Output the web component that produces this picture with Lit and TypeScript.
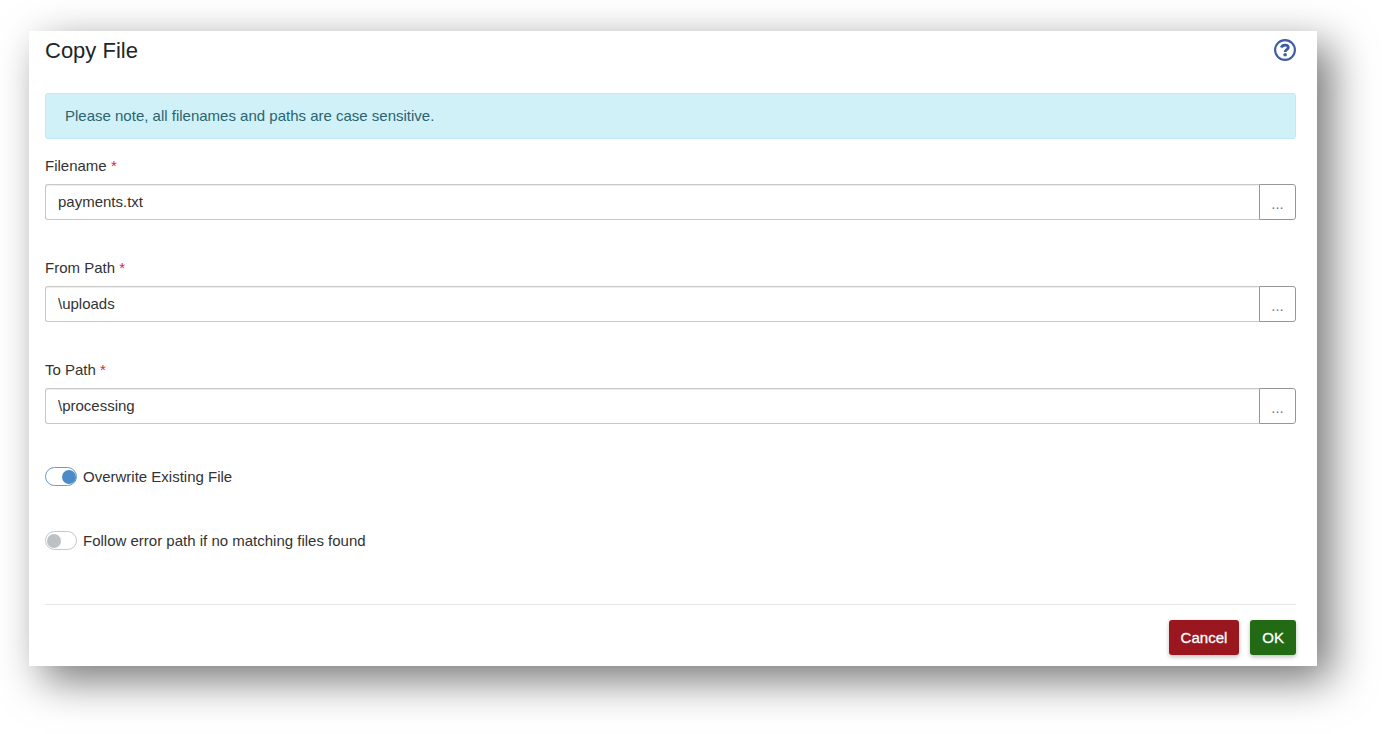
import { LitElement, html, css } from "lit";
import { customElement, property } from "lit/decorators.js";

@customElement("path-field")
class PathField extends LitElement {
  @property() label = "";
  @property() value = "";

  static styles = css`
    :host {
      display: block;
    }
    .label {
      display: block;
      line-height: 24px;
      margin-bottom: 6px;
    }
    .required {
      color: #e0242e;
    }
    .group {
      display: flex;
    }
    .input {
      box-sizing: border-box;
      flex: 1;
      min-width: 0;
      height: 36px;
      padding: 0 12px 2px;
      border: 1px solid #c8c8c8;
      border-right: 0;
      border-radius: 3px 0 0 3px;
      box-shadow: inset 0 1px 1px rgba(0, 0, 0, 0.075);
      background: #fff;
      color: #333;
      font: inherit;
    }
    .browse {
      box-sizing: border-box;
      width: 37px;
      height: 36px;
      padding: 2px 0 0;
      border: 1px solid #969696;
      border-radius: 0 3px 3px 0;
      background: #fff;
      color: #777;
      font: inherit;
    }
  `;

  render() {
    return html`
      <label class="label" for="field">${this.label} <span class="required">*</span></label>
      <div class="group">
        <input class="input" id="field" type="text" required .value=${this.value} />
        <button class="browse" type="button" aria-label="Browse">...</button>
      </div>
    `;
  }
}

@customElement("toggle-switch")
class ToggleSwitch extends LitElement {
  @property() label = "";
  @property({ type: Boolean }) checked = false;

  static styles = css`
    :host {
      display: block;
    }
    .row {
      display: flex;
      align-items: center;
      gap: 6px;
      line-height: 23px;
    }
    .switch {
      appearance: none;
      box-sizing: border-box;
      display: flex;
      align-items: center;
      width: 32px;
      height: 19px;
      margin: 0;
      padding: 0 1px;
      border: 1px solid #c3c8cc;
      border-radius: 10px;
      background: #fff;
    }
    .switch::before {
      content: "";
      width: 14px;
      height: 14px;
      border-radius: 50%;
      background: #bcc1c5;
    }
    .switch:checked {
      justify-content: flex-end;
      padding: 0;
      border-color: #6a9bcf;
    }
    .switch:checked::before {
      background: #4c8ac8;
    }
  `;

  render() {
    return html`
      <div class="row">
        <input class="switch" id="switch" type="checkbox" role="switch" .checked=${this.checked} />
        <label for="switch">${this.label}</label>
      </div>
    `;
  }
}

@customElement("app-root")
class AppRoot extends LitElement {
  static styles = css`
    :host {
      display: block;
      padding: 31px 65px 68px 29px;
      background: #fff;
      color: #333;
      font: 15px "Liberation Sans", Arial, sans-serif;
    }
    .dialog {
      padding: 0 21px 11px 16px;
      background: #fff;
      box-shadow: 14px 14px 40px rgba(0, 0, 0, 0.54);
    }
    .header {
      display: flex;
      align-items: flex-start;
      justify-content: space-between;
      padding: 8px 0 30px;
    }
    .title {
      margin: 0;
      color: #212529;
      font-size: 22px;
      font-weight: 400;
      line-height: 24px;
    }
    .help {
      display: flex;
      padding: 0;
      border: 0;
      background: none;
      color: #3f5da3;
    }
    .help-icon {
      width: 22px;
      height: 22px;
    }
    .note {
      padding: 10px 19px;
      margin-bottom: 15px;
      border: 1px solid #bdecf4;
      border-radius: 3px;
      background: #d0f1f8;
      color: #2b6470;
      line-height: 24px;
    }
    .fields {
      display: grid;
      gap: 36px;
    }
    .switches {
      display: grid;
      gap: 41px;
      padding: 41px 0 52px;
    }
    .footer {
      display: flex;
      justify-content: flex-end;
      gap: 11px;
      padding-top: 15px;
      border-top: 1px solid #e5e5e5;
    }
    .button {
      height: 35px;
      padding: 0 12px;
      border: 0;
      border-radius: 3px;
      box-shadow: 0 2px 4px rgba(0, 0, 0, 0.25);
      color: #fff;
      font: inherit;
      -webkit-text-stroke: 0.3px #fff;
    }
    .cancel {
      background: #9b1720;
    }
    .ok {
      background: #226a14;
    }
  `;

  render() {
    return html`
      <section class="dialog" role="dialog" aria-labelledby="title">
        <header class="header">
          <h1 class="title" id="title">Copy File</h1>
          <button class="help" type="button" aria-label="Help">
            <svg class="help-icon" viewBox="0 0 22 22" fill="none" stroke="currentColor">
              <circle cx="11" cy="11" r="9.9" stroke-width="2.1" />
              <path d="M7.2 8.6C7.8 7 9.2 6.1 11.1 6.1c2 0 3.2 0.9 3.2 2.4 0 2.2-3.2 2.2-3.2 4.5" stroke-width="2.8" />
              <circle cx="11.1" cy="15.8" r="1.8" fill="currentColor" stroke="none" />
            </svg>
          </button>
        </header>
        <div class="note" role="note">Please note, all filenames and paths are case sensitive.</div>
        <div class="fields">
          <path-field label="Filename" value="payments.txt"></path-field>
          <path-field label="From Path" value="\\uploads"></path-field>
          <path-field label="To Path" value="\\processing"></path-field>
        </div>
        <div class="switches">
          <toggle-switch label="Overwrite Existing File" checked></toggle-switch>
          <toggle-switch label="Follow error path if no matching files found"></toggle-switch>
        </div>
        <footer class="footer">
          <button class="button cancel" type="button">Cancel</button>
          <button class="button ok" type="button">OK</button>
        </footer>
      </section>
    `;
  }
}
